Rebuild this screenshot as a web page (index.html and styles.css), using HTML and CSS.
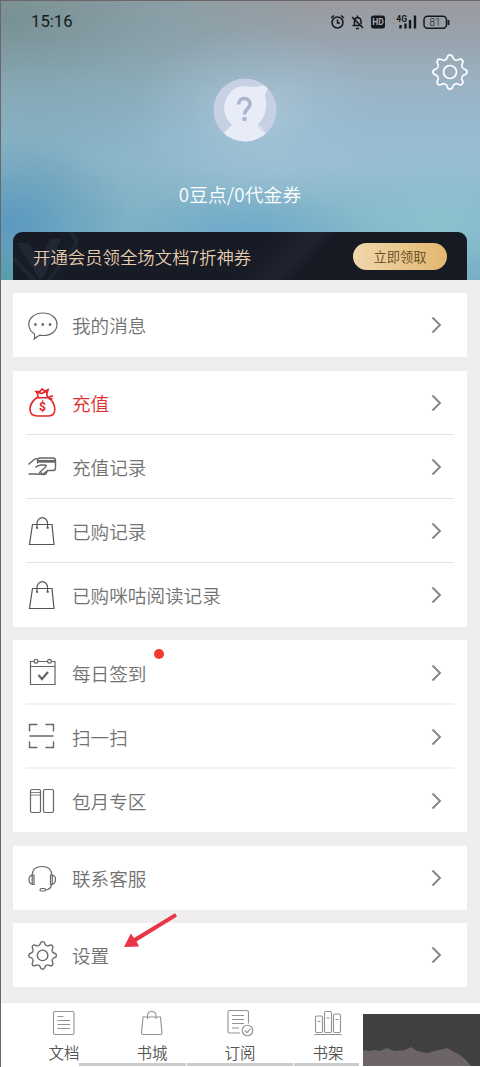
FILE: index.html
```html
<!DOCTYPE html>
<html lang="zh-CN">
<head>
<meta charset="utf-8">
<title>我的</title>
<link rel="stylesheet" href="styles.css">
</head>
<body>
<svg class="defs" width="0" height="0">
  <defs>
    <path id="tooth" d="M-5-12C-3.4-12.7-3.1-13-2.7-14.8C-2.1-17.8 2.1-17.8 2.7-14.8C3.1-13 3.4-12.7 5-12"/>
    <g id="gear">
      <use href="#tooth"/><use href="#tooth" transform="rotate(45)"/><use href="#tooth" transform="rotate(90)"/><use href="#tooth" transform="rotate(135)"/>
      <use href="#tooth" transform="rotate(180)"/><use href="#tooth" transform="rotate(225)"/><use href="#tooth" transform="rotate(270)"/><use href="#tooth" transform="rotate(315)"/>
      <circle r="6.5"/>
    </g>
    <g id="bag"><path d="M4.500 8.500H24L26 28.500H1.500ZM9 12V7.500a5.300 5.800 0 0 1 10.600 0V12"/><path d="M9 11v1.700M19.600 11v1.700" stroke-width="2"/></g>
    <path id="chevron" d="M1.500 1.500L9 9L1.500 16.500"/>
  </defs>
</svg>
<div class="phone">
  <header class="hero">
    <div class="status">
      <span class="time">15:16</span>
      <svg class="status-icons" width="122" height="18" viewBox="0 0 122 18" fill="none" stroke="#15191d" stroke-width="1.500">
        <circle cx="6.500" cy="9.500" r="5.500"/><path d="M6.500 6.500V10H9M0 5L3 2.500M13 5L10 2.500"/>
        <path d="M21.500 12.500H31M23.500 12V8.500Q23.500 5 26.500 4.500Q30 5 30 8.500V11M26.500 2.500V4.500M25 15.500H28M21 4L32 15"/>
        <rect x="40" y="2.500" width="14" height="13" rx="2.500" fill="#15191d" stroke="none"/>
        <text class="hd" x="41.300" y="12.200">HD</text>
        <path d="M61 6L62.500 4.500L64 6M61 9L62.500 10.500L64 9" stroke="#8a9095" stroke-width="1"/>
        <text class="net" x="65.300" y="8.800">4G</text>
        <path d="M69.500 12V15.500M74.500 10.500V15.500M79 7V15.500M84 2.500V15.500" stroke-width="2.400"/>
        <rect x="93" y="3.200" width="22.500" height="12" rx="3.500"/><path d="M117.500 7V12" stroke-width="1.800"/>
        <text class="batt" x="98.500" y="12.800">81</text>
      </svg>
    </div>
    <svg class="hero-gear" width="38" height="38" viewBox="-19 -19 38 38"><use href="#gear"/></svg>
    <svg class="avatar" width="64" height="64" viewBox="0 0 64 64">
      <defs><clipPath id="round"><circle cx="32" cy="32" r="31.500"/></clipPath></defs>
      <g clip-path="url(#round)">
        <circle cx="32" cy="32" r="32" fill="#c8d1e4"/>
        <path d="M31 8C39 10 48 8 54 7Q56 9 52 17C55 30 52 39 45 46L53 55V64H11V55L19 47C13 41 10 34 11.500 26C14 15 22 8 31 8Z" fill="#e8ecf6"/>
        <path d="M45 47Q47 53 53 54M48 46L54 50" fill="none" stroke="#c8d1e4"/>
        <path d="M25.500 26.500C25.500 18.500 37 18.500 37 26C37 30.500 31.500 31 31.500 36.500" fill="none" stroke="#aab6d0" stroke-width="3.600"/>
        <circle cx="31.500" cy="41" r="2.300" fill="#aab6d0"/>
      </g>
    </svg>
    <div class="balance">0豆点/0代金券</div>
    <div class="vip">
      <svg class="vip-mark" width="72" height="48" viewBox="0 0 72 48"><path d="M4 11H16L27 30L36 9Q37 7 40 7H48L32 42L27 48Z" fill="#222833"/><path d="M0 26L22 49M36 48L62 14Q65 8 57 0" fill="none" stroke="#202631" stroke-width="4"/></svg>
      <span class="vip-text">开通会员领全场文档7折神券</span>
      <span class="vip-btn">立即领取</span>
    </div>
  </header>

  <main class="list">
    <section class="card">
      <div class="row"><svg class="icon" viewBox="0 0 30 30"><path d="M6.500 24C2.500 21.500 .8 18 .8 14.500C.8 8 7 3 15 3S29 8 29 14.500S23 25.500 15 25.500Q13 25.500 11.500 25.200Q9 27 6.300 29Q7 26.500 6.500 24Z"/><path d="M6.200 14.500h2.400M13.500 14.500h2.400M20.800 14.500h2.400" stroke-width="2.400"/></svg><span>我的消息</span><svg class="arrow" viewBox="0 0 11 18"><use href="#chevron"/></svg></div>
    </section>
    <section class="card">
      <div class="row red"><svg class="icon" viewBox="0 0 30 30"><path d="M9 9.500C5 12.500 2 16.500 2 21Q2 28 9.500 28H20.500Q26.800 28 26.800 21C26.800 16.500 24.500 12.500 20 9.500M9 9.800H20M9.500 9.500Q11 7 8 3.500L12 3.500L14 1L16.500 3.200L20 1.800Q18 6 19.500 9.500M8.500 4L13.500 5.500L19.500 3M19.500 9.500L25 7.800M20 9.800L24.500 11" stroke-width="1.600"/><text class="dollar" x="10.900" y="23.400">$</text></svg><span>充值</span><svg class="arrow" viewBox="0 0 11 18"><use href="#chevron"/></svg></div>
      <div class="row"><svg class="icon" viewBox="0 0 30 30"><path d="M.5 12.500L6 7.500L9 6.300M.5 22H6L11.500 22.300H15L19.500 18.500M9.500 11.500V8.500Q9.500 6 12 6H25Q27.500 6 27.500 8.500V16Q27.500 18.500 25 18.500H19.500M7.500 15.500Q9 13.500 13 13H17Q19.500 13.500 17.500 15L11 21M13 20.500L15 22.800L18 22L19.500 18.500" stroke-width="1.400"/><path d="M10 9.300H27.500" stroke-width="2.800"/></svg><span>充值记录</span><svg class="arrow" viewBox="0 0 11 18"><use href="#chevron"/></svg></div>
      <div class="row"><svg class="icon bag" viewBox="0 0 30 30"><use href="#bag"/></svg><span>已购记录</span><svg class="arrow" viewBox="0 0 11 18"><use href="#chevron"/></svg></div>
      <div class="row"><svg class="icon bag" viewBox="0 0 30 30"><use href="#bag"/></svg><span>已购咪咕阅读记录</span><svg class="arrow" viewBox="0 0 11 18"><use href="#chevron"/></svg></div>
    </section>
    <section class="card lower">
      <div class="row"><svg class="icon" viewBox="0 0 30 30"><path d="M6 3.500H2.500V26.500H27V3.500H23.500M10 3.500H19.500M2.500 8.500H27"/><circle cx="8" cy="3.200" r="1.900"/><circle cx="21.500" cy="3.200" r="1.900"/><path d="M10.500 17L14 21L20 14" stroke-width="2.200"/></svg><span class="badged">每日签到<i class="dot"></i></span><svg class="arrow" viewBox="0 0 11 18"><use href="#chevron"/></svg></div>
      <div class="row"><svg class="icon" viewBox="0 0 30 30"><path d="M1.500 9.500V2.500H9.500M17.500 2.500H25.500V9.500M1.500 19.500V25.500H9.500M17.500 25.500H25.500V19.500M1.500 14H25.500" stroke-width="1.400"/></svg><span>扫一扫</span><svg class="arrow" viewBox="0 0 11 18"><use href="#chevron"/></svg></div>
      <div class="row"><svg class="icon" viewBox="0 0 30 30"><rect x="2.500" y="3.500" width="10" height="23" rx="1.500"/><rect x="15.500" y="3.500" width="10" height="23" rx="1.500"/><path d="M2.500 6.500H12.500M2.500 9H12.500" stroke-width=".8"/></svg><span>包月专区</span><svg class="arrow" viewBox="0 0 11 18"><use href="#chevron"/></svg></div>
    </section>
    <section class="card">
      <div class="row"><svg class="icon" viewBox="0 0 30 30"><path d="M4 12C4.500 6 8.500 3.500 14 3.500S23.500 6 24 12M23.500 21Q23.500 26.500 17 27"/><path d="M6 12H4.500Q1 12.500 1 16.500T4.500 21.500H6ZM22.500 12H24Q27.500 12.500 27.500 16.500T24 21.500H22.500ZM4.200 12V21.500M24.300 12V21.500"/><rect x="12" y="25.500" width="5.500" height="2.500" rx="1.200"/></svg><span>联系客服</span><svg class="arrow" viewBox="0 0 11 18"><use href="#chevron"/></svg></div>
    </section>
    <section class="card">
      <div class="row"><svg class="icon cog" viewBox="-18 -19 37 37"><use href="#gear"/></svg><span>设置</span><svg class="arrow" viewBox="0 0 11 18"><use href="#chevron"/></svg></div>
      <svg class="pointer" width="54" height="36" viewBox="0 0 54 36"><path d="M0 34L6.800 20.500L10 25L51 .3L53 3.500L12.500 28.500L15 33.500Z" fill="#ea3447"/></svg>
    </section>
  </main>

  <nav class="tabs">
    <div class="tab"><svg viewBox="0 0 28 28"><rect x="3.500" y="2.500" width="20.500" height="23" rx="1.500"/><path d="M7.500 7.500H13.500M7.500 11.500H20M7.500 15.500H20M7.500 19.500H20"/></svg><span>文档</span></div>
    <div class="tab"><svg viewBox="0 0 28 28"><path d="M5 8H22.500L24 24Q24 25.500 22.500 25.500H5Q3.500 25.500 3.500 24ZM9.500 10V7Q9.500 2.500 13.700 2.500T18 7V10"/></svg><span>书城</span></div>
    <div class="tab"><svg viewBox="0 0 28 28"><path d="M14 24H3.500Q2 24 2 22.500V3Q2 1.500 3.500 1.500H20.500Q22.500 1.500 22.500 3.500V14.500M6 6.500H18M6 10.500H18M6 14.500H18M6 19H13"/><circle cx="21.500" cy="21.500" r="5.300"/><path d="M18.800 21.500L21 23.700L24.500 19.700"/></svg><span>订阅</span></div>
    <div class="tab"><svg viewBox="0 0 28 28"><rect x="1.500" y="7" width="7" height="16.500" rx="1.500"/><rect x="10.500" y="2.500" width="7" height="21" rx="1.500"/><rect x="19.500" y="5" width="7" height="18.500" rx="1.500"/><path d="M3.500 12.500H6.500M12.500 9H15.500M21.500 10.500H24.500M.5 25.500H27.500"/></svg><span>书架</span></div>
  </nav>
  <div class="scroll"><i></i><i></i><i></i></div>
  <svg class="panel" width="117" height="52" viewBox="0 0 117 52"><path d="M0 0H117V52H0Z" fill="#404040"/><path d="M0 36L6 37L12 36L17 37L24 34L31 37L42 36L48 33L54 37L64 39L76 36L84 34L91 38L97 41L103 46L108 52H0Z" fill="#6c6465"/></svg>
</div>
</body>
</html>
```
FILE: styles.css
```css
* { box-sizing: border-box; }
body { margin: 0; background: #fff; font-family: "Noto Sans CJK SC DemiLight", "Noto Sans CJK SC", sans-serif; font-weight: 350; color: #727272; }
.defs { position: absolute; }
.phone { position: relative; width: 480px; height: 1067px; overflow: hidden; display: flex; flex-direction: column; background: #efedef; }
.phone::after { content: ""; position: absolute; z-index: 2; left: 0; top: 0; width: 480px; height: 1007px; border: 1px solid #6b6668; border-bottom: 0; pointer-events: none; }
.phone::before { content: ""; position: absolute; z-index: 2; left: 0; top: 1007px; width: 359px; height: 60px; border: 1px solid #6b6668; border-top: 0; border-right: 0; }

.hero {
  position: relative; flex: none; height: 280px; padding: 0 13px; display: flex; flex-direction: column; align-items: center;
  background:
    radial-gradient(ellipse 120px 85px at 255px 112px, rgba(180,206,220,.55), rgba(165,198,216,.25) 55%, transparent),
    radial-gradient(ellipse 120px 85px at 10px 222px, rgba(80,145,190,.75), rgba(85,148,185,.35) 55%, transparent),
    radial-gradient(ellipse 120px 50px at 245px 235px, rgba(100,162,208,.6), rgba(105,165,200,.3) 55%, transparent),
    radial-gradient(ellipse 50px 60px at 0 290px, rgba(74,156,150,.9), transparent),
    radial-gradient(ellipse 170px 75px at 440px 220px, rgba(146,198,208,.75), rgba(140,192,205,.3) 60%, transparent),
    radial-gradient(ellipse 330px 140px at 0 20px, rgba(108,140,142,.75), rgba(122,160,168,.5) 50%, transparent),
    radial-gradient(ellipse 230px 130px at 40px 170px, rgba(118,168,186,.65), rgba(122,172,190,.3) 55%, transparent),
    linear-gradient(#9b9a9f 0, #99a3ad 38px, #9ab3c4 85px, #97bad0 130px, #9abed2 165px, #82b5ca 215px, #76acc4 280px);
}
.status { width: 100%; height: 42px; padding: 2px 4px 0 18px; display: flex; align-items: center; justify-content: space-between; }
.time { font: 400 16.700px/20px Roboto, sans-serif; color: #15191d; letter-spacing: 0; }
.status-icons { margin-right: 10px; flex: none; }
.status-icons text { stroke: none; font-family: Roboto, sans-serif; }
.hd { font-size: 8.500px; font-weight: 700; fill: #a9b0b6; }
.net { font-size: 8.500px; font-weight: 700; fill: #15191d; }
.batt { font-size: 10px; fill: #15191d; }
.hero-gear { position: absolute; left: 431px; top: 53px; fill: none; stroke: #fff; stroke-width: 1.700; }
.avatar { margin: 36px 0 0 10px; }
.balance { margin-top: 38px; height: 28px; line-height: 28px; font-size: 18.700px; color: #fff; white-space: nowrap; letter-spacing: .15px; }
.vip { position: absolute; left: 13px; bottom: 0; width: 454px; height: 48px; padding: 0 20px; display: flex; align-items: center; justify-content: space-between; border-radius: 9px 9px 0 0; overflow: hidden; background: linear-gradient(135deg, #161b25 0 54%, #20232e 61%, #151a23 66%); }
.vip-mark { position: absolute; left: 0; top: 0; }
.vip-text { position: relative; color: #e5ccac; font-size: 17.400px; white-space: nowrap; }
.vip-btn { width: 94px; height: 27px; border-radius: 14px; background: linear-gradient(90deg, #efd7ad, #e2b76f); color: #64481e; font-size: 13.300px; line-height: 27px; text-align: center; }

.list { flex: none; height: 723px; padding: 13px 13px 0; display: flex; flex-direction: column; gap: 13.500px; }
.card { position: relative; flex: none; background: #fff; padding: 0 13px; }
.row { height: 64px; display: flex; align-items: center; font-size: 18.600px; line-height: 28px; }
.row:not(:last-of-type) { box-shadow: inset 0 -1px #e5e4e5; }
.lower .row { padding-top: 1px; }
.lower .row:not(:last-of-type) { box-shadow: 0 .5px #e5e4e5, inset 0 -.5px #e5e4e5; }
.row > span { margin-left: 14px; flex: 1; }
.row.red { color: #e12f2f; }
.icon { width: 30px; height: 30px; margin-left: 2px; fill: none; stroke: #666; stroke-width: 1.200; overflow: visible; }
.icon + span { white-space: nowrap; }
.red .icon { stroke: #e32626; }
.bag { stroke: #555; }
.cog { stroke-width: 1.700; }
.dollar { font: 700 12px Roboto, sans-serif; fill: #e32626; stroke: none; }
.arrow { width: 11px; height: 18px; margin-right: 12px; fill: none; stroke: #858585; stroke-width: 1.900; }
.badged { position: relative; }
.dot { position: absolute; left: 81.500px; top: -9.500px; width: 10px; height: 10px; border-radius: 50%; background: #f33b30; }
.pointer { position: absolute; left: 111px; top: -10px; overflow: visible; }

.tabs { flex: none; height: 64px; padding: 0 108px 0 20px; display: grid; grid-template-columns: repeat(4, 1fr); background: #fff; }
.tab { display: flex; flex-direction: column; align-items: center; padding-top: 6px; font-size: 15.500px; line-height: 24px; color: #555; }
.tab svg { width: 28px; height: 28px; fill: none; stroke: #929292; stroke-width: 1.100; }
.tab span { margin-top: 3px; }
.scroll { position: absolute; left: 79px; top: 1063px; width: 280px; height: 3px; display: grid; grid-template-columns: 107px 106px 1fr; gap: 1px; }
.scroll i { background: #cbcbcb; }
.panel { position: absolute; left: 363px; top: 1014px; }
```
